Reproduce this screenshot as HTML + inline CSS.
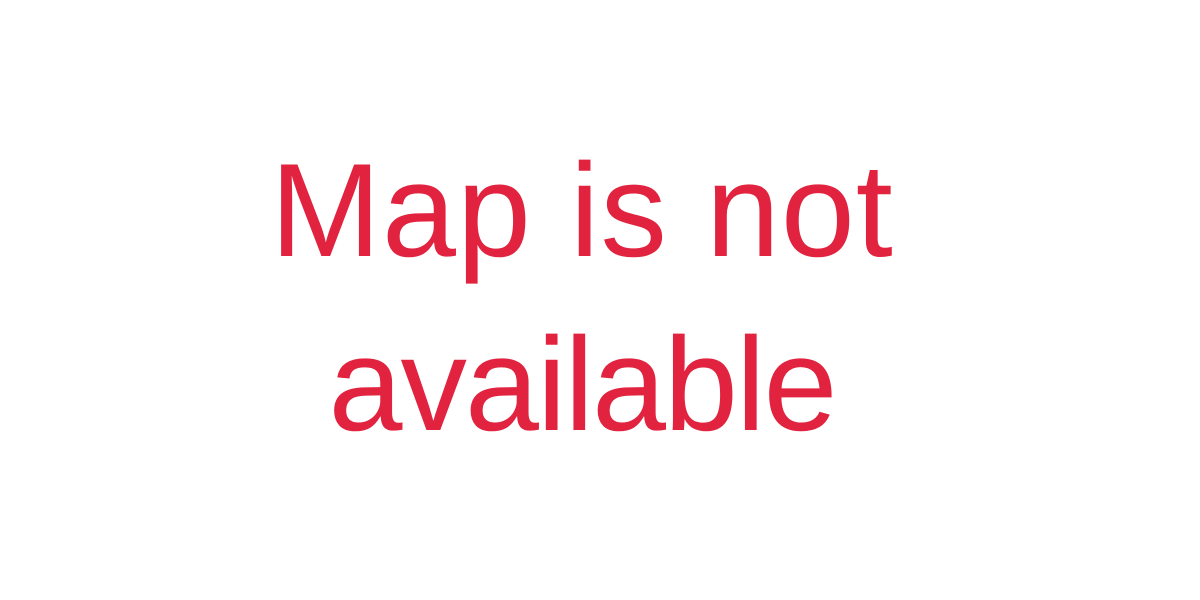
<!DOCTYPE html>
<html><head><meta charset="utf-8"><style>
html,body{margin:0;padding:0;background:#fff;width:1200px;height:600px;overflow:hidden}
.t{position:absolute;left:0;width:1200px;text-align:center;font-family:"Liberation Sans",sans-serif;font-size:133px;line-height:133px;color:#e1233f;white-space:nowrap}
</style></head><body>
<div class="t" style="top:145px;left:-18px;letter-spacing:1px">Map is not</div>
<div class="t" style="top:319px;left:-18px;letter-spacing:-2px">available</div>
</body></html>
